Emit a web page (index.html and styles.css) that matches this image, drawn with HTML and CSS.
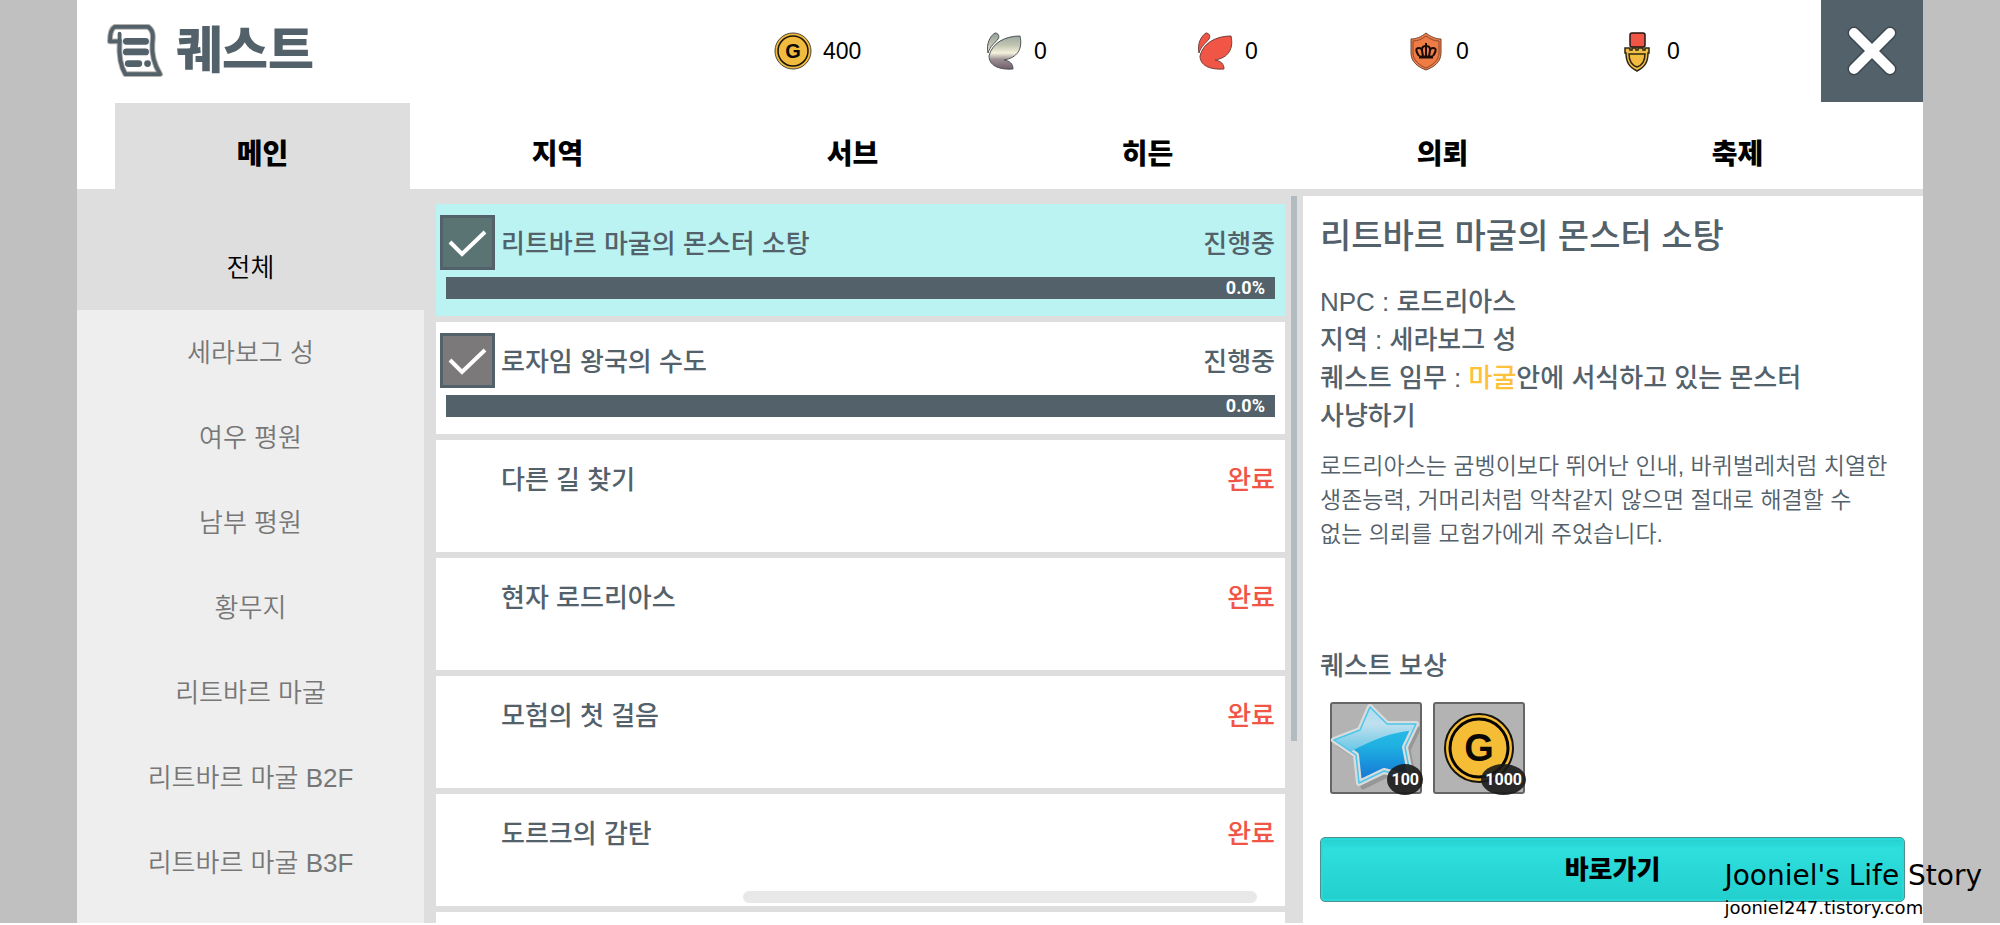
FILE: index.html
```html
<!DOCTYPE html>
<html lang="ko">
<head>
<meta charset="utf-8">
<meta name="viewport" content="width=device-width, initial-scale=1">
<title>퀘스트</title>
<link rel="stylesheet" href="styles.css">
</head>
<body>
<div class="stage">
  <div class="panel">
    <header class="header">
      <svg class="title-icon" viewBox="0 0 56 56" aria-hidden="true">
        <g fill="none" stroke="#b5b1ad" stroke-width="6" stroke-linejoin="round">
          <path d="M7 3H42C47 7 47 12 46 20C45 32 48 42 54 52H18C13 44 11 35 12 18H2C2 10 3 5 7 3Z"/>
        </g>
        <g fill="none" stroke="#53616b" stroke-width="4" stroke-linejoin="round" stroke-linecap="round">
          <path d="M7 3H42C47 7 47 12 46 20C45 32 48 42 54 52H18C13 44 11 35 12 18H2C2 10 3 5 7 3Z"/>
          <path d="M12 18V10"/>
          <path stroke-width="7" d="M19 18H39M19 29H39M21 41H32M41 41H41"/>
        </g>
      </svg>
      <h1 class="title">퀘스트</h1>
      <ul class="wallet">
        <li class="coin-count">
          <svg class="wallet-icon" viewBox="0 0 38 38" aria-hidden="true">
            <circle cx="19" cy="19" r="18" fill="#f0bb3f" stroke="#4d4534" stroke-width="1"/>
            <circle cx="19" cy="19" r="15" fill="none" stroke="#17130a" stroke-width="1.5"/>
            <text class="coin-letter" x="19" y="26" font-size="20">G</text>
          </svg>
          <span>400</span>
        </li>
        <li class="coin-count">
          <svg class="wallet-icon" viewBox="0 0 38 38" aria-hidden="true">
            <defs>
              <linearGradient id="pearl" x1="0" y1="0" x2="0" y2="38" gradientUnits="userSpaceOnUse">
                <stop offset="0" stop-color="#8d9c98"/>
                <stop offset=".35" stop-color="#c3c5b2"/>
                <stop offset=".55" stop-color="#f4f2dd"/>
                <stop offset=".72" stop-color="#9c8f94"/>
                <stop offset="1" stop-color="#6d5a66"/>
              </linearGradient>
            </defs>
            <g fill="url(#pearl)" stroke="#4c5253" stroke-width="1">
              <path d="M3 21C1 12 5 4 10 1C13 1 15 4 13 7C10 11 5 14 3 21Z"/>
              <path d="M4 24C7 11 20 4 35 4C38 17 32 26 19 28C25 29 28 32 28 37C13 38 4 33 4 24Z"/>
            </g>
          </svg>
          <span>0</span>
        </li>
        <li class="coin-count">
          <svg class="wallet-icon" viewBox="0 0 38 38" aria-hidden="true">
            <g fill="#f05545" stroke="#73403b" stroke-width="1">
              <path d="M3 21C1 12 5 4 10 1C13 1 15 4 13 7C10 11 5 14 3 21Z"/>
              <path d="M4 24C7 11 20 4 35 4C38 17 32 26 19 28C25 29 28 32 28 37C13 38 4 33 4 24Z"/>
            </g>
          </svg>
          <span>0</span>
        </li>
        <li class="coin-count">
          <svg class="wallet-icon" viewBox="0 0 38 38" aria-hidden="true">
            <path d="M19 1C24 5 29 7 34 7V21C34 30 27 35 19 38C11 35 4 30 4 21V7C9 7 14 5 19 1Z" fill="#ef7b45" stroke="#704634"/>
            <path d="M19 4C23 7 27 9 32 9V21C32 28 26 33 19 36C12 33 6 28 6 21V9C11 9 15 7 19 4Z" fill="none" stroke="#8d4b2e"/>
            <g fill="none" stroke="#190c06" stroke-width="2">
              <path d="M12 24C8 18 9 16 12 16C15 16 15 18 16 24C14 16 15 14 19 14C23 14 24 16 22 24C23 18 23 16 26 16C29 16 30 18 26 24M19 11V24"/>
              <path stroke-width="3" d="M12 25H26"/>
            </g>
          </svg>
          <span>0</span>
        </li>
        <li class="coin-count">
          <svg class="wallet-icon" viewBox="0 0 38 38" aria-hidden="true">
            <rect x="12" y="1" width="15" height="14" rx="2" fill="#f05545" stroke="#241412" stroke-width="1.5"/>
            <path d="M7 16H12V18H14V16H18V18H20V16H25V18H27V16H31V21H30C30 30 27 35 19 39C11 35 8 30 8 21H7Z" fill="#efbd49" stroke="#30270f" stroke-width="1.5"/>
            <path d="M11 22H27C27 29 25 33 19 35C13 33 11 29 11 22Z" fill="#f0bb3f" stroke="#30270f" stroke-width="1.5"/>
          </svg>
          <span>0</span>
        </li>
      </ul>
      <button class="close" type="button" aria-label="닫기">
        <svg class="close-icon" viewBox="0 0 50 50" aria-hidden="true">
          <path d="M7 7L43 43M43 7L7 43" stroke="#3c474f" stroke-width="13"/>
          <path d="M7 7L43 43M43 7L7 43" stroke="#fff" stroke-width="10"/>
        </svg>
      </button>
    </header>

    <nav class="tabs">
      <button class="tab tab-active" type="button">메인</button>
      <button class="tab" type="button">지역</button>
      <button class="tab" type="button">서브</button>
      <button class="tab" type="button">히든</button>
      <button class="tab" type="button">의뢰</button>
      <button class="tab" type="button">축제</button>
    </nav>

    <main class="content">
      <nav class="areas">
        <button class="area area-active" type="button">전체</button>
        <button class="area" type="button">세라보그 성</button>
        <button class="area" type="button">여우 평원</button>
        <button class="area" type="button">남부 평원</button>
        <button class="area" type="button">황무지</button>
        <button class="area" type="button">리트바르 마굴</button>
        <button class="area" type="button">리트바르 마굴 B2F</button>
        <button class="area" type="button">리트바르 마굴 B3F</button>
      </nav>

      <section class="list-pane">
        <ul class="quests">
          <li class="quest quest-selected">
            <div class="quest-row">
              <span class="check">
                <input class="check-input" type="checkbox" id="q1" checked>
                <svg class="check-mark" viewBox="0 0 55 55" aria-hidden="true"><path d="M10 27L22 39L45 17"/></svg>
              </span>
              <label class="quest-name" for="q1">리트바르 마굴의 몬스터 소탕</label>
              <span class="quest-state">진행중</span>
            </div>
            <div class="bar" role="progressbar" aria-valuenow="0">0.0%</div>
          </li>
          <li class="quest">
            <div class="quest-row">
              <span class="check">
                <input class="check-input" type="checkbox" id="q2" checked>
                <svg class="check-mark" viewBox="0 0 55 55" aria-hidden="true"><path d="M10 27L22 39L45 17"/></svg>
              </span>
              <label class="quest-name" for="q2">로자임 왕국의 수도</label>
              <span class="quest-state">진행중</span>
            </div>
            <div class="bar" role="progressbar" aria-valuenow="0">0.0%</div>
          </li>
          <li class="quest">
            <div class="quest-row"><span class="check"></span><span class="quest-name">다른 길 찾기</span><span class="quest-state quest-done">완료</span></div>
          </li>
          <li class="quest">
            <div class="quest-row"><span class="check"></span><span class="quest-name">현자 로드리아스</span><span class="quest-state quest-done">완료</span></div>
          </li>
          <li class="quest">
            <div class="quest-row"><span class="check"></span><span class="quest-name">모험의 첫 걸음</span><span class="quest-state quest-done">완료</span></div>
          </li>
          <li class="quest">
            <div class="quest-row"><span class="check"></span><span class="quest-name">도르크의 감탄</span><span class="quest-state quest-done">완료</span></div>
          </li>
          <li class="quest"></li>
        </ul>
        <div class="scroll-thumb"></div>
      </section>

      <section class="detail">
        <h2 class="detail-title">리트바르 마굴의 몬스터 소탕</h2>
        <p class="facts">NPC : 로드리아스<br>지역 : 세라보그 성<br>퀘스트 임무 : <em class="mark">마굴</em>안에 서식하고 있는 몬스터<br>사냥하기</p>
        <p class="story">로드리아스는 굼벵이보다 뛰어난 인내, 바퀴벌레처럼 치열한<br>생존능력, 거머리처럼 악착같지 않으면 절대로 해결할 수<br>없는 의뢰를 모험가에게 주었습니다.</p>
        <div class="reward">
          <h3 class="reward-title">퀘스트 보상</h3>
          <ul class="reward-items">
            <li class="item">
              <svg class="item-icon" viewBox="0 0 88 88" aria-hidden="true">
                <defs>
                  <linearGradient id="star-fill" x1="0" y1="0" x2="0" y2="1">
                    <stop offset="0" stop-color="#35c4ea"/>
                    <stop offset=".5" stop-color="#1fb2e2"/>
                    <stop offset="1" stop-color="#1470d4"/>
                  </linearGradient>
                  <linearGradient id="star-gloss" x1="0" y1="0" x2="0" y2="50" gradientUnits="userSpaceOnUse">
                    <stop offset="0" stop-color="#a9dcf0"/>
                    <stop offset=".4" stop-color="#bfe0ee"/>
                    <stop offset="1" stop-color="#5fc4e6"/>
                  </linearGradient>
                  <clipPath id="star-clip"><path d="M38 3L55 20L84 20L73 43L79 74L52 67L27 79L24 51L2 36L28 26Z"/></clipPath>
                </defs>
                <path d="M42 8L58 24L86 25L76 46L82 77L55 71L31 83L28 55L7 41L33 30Z" fill="#858585" stroke="#858585" stroke-width="5" stroke-linejoin="round" opacity=".6"/>
                <path d="M38 3L55 20L84 20L73 43L79 74L52 67L27 79L24 51L2 36L28 26Z" fill="url(#star-fill)" stroke="#d9dcdd" stroke-width="6" stroke-linejoin="round"/>
                <g clip-path="url(#star-clip)">
                  <path d="M0 0H88V26C62 27 44 34 18 48L0 60Z" fill="url(#star-gloss)"/>
                </g>
                <path d="M38 3L55 20L84 20L73 43L79 74L52 67L27 79L24 51L2 36L28 26Z" fill="none" stroke="#4cc6ea" stroke-width="1.5" stroke-linejoin="round"/>
              </svg>
              <span class="item-count">100</span>
            </li>
            <li class="item">
              <svg class="item-icon" viewBox="0 0 88 88" aria-hidden="true">
                <circle cx="44" cy="44" r="34" fill="#f5bc35" stroke="#17130a" stroke-width="2"/>
                <circle cx="44" cy="44" r="29" fill="none" stroke="#050400" stroke-width="3"/>
                <text class="coin-letter" x="44" y="57" font-size="38">G</text>
              </svg>
              <span class="item-count">1000</span>
            </li>
          </ul>
        </div>
        <button class="go" type="button">바로가기</button>
      </section>
    </main>
  </div>
  <div class="home-bar"></div>
  <p class="credit"><span class="credit-name">Jooniel's Life Story</span><span class="credit-site">jooniel247.tistory.com</span></p>
</div>
</body>
</html>
```
FILE: styles.css
```css
* {
  box-sizing: border-box;
}

body,
h1,
h2,
h3,
p,
ul {
  margin: 0;
  padding: 0;
}

ul {
  list-style: none;
}

body {
  background: #fff;
  color: #53616b;
  font-family: "Liberation Sans", "Noto Sans CJK KR", sans-serif;
  font-size: 26px;
  font-weight: 500;
}

button {
  margin: 0;
  padding: 0;
  border: 0;
  background: none;
  color: #000;
  font: inherit;
}

.stage {
  position: relative;
  height: calc(100vh - 2px);
  padding: 0 77px;
  overflow: hidden;
  background: #c0c0c0;
}

.panel {
  display: flex;
  flex-direction: column;
  height: 100%;
  background: #fff;
}

/* Header */
.header {
  display: flex;
  align-items: center;
  height: 102px;
  padding-left: 31px;
}

.title-icon {
  width: 54px;
  height: 54px;
  overflow: visible;
}

.title {
  margin-left: 14px;
  font-size: 50px;
  font-weight: 900;
  line-height: 56px;
}

.wallet {
  display: flex;
  gap: 121px;
  margin-left: auto;
  margin-right: 113px;
}

.coin-count {
  display: flex;
  align-items: center;
  gap: 11px;
  width: 90px;
  color: #000;
  font-size: 23px;
}

.wallet-icon {
  width: 38px;
  height: 38px;
  overflow: visible;
}

.coin-letter {
  fill: #0a0803;
  font-weight: 700;
  text-anchor: middle;
}

.close {
  display: grid;
  place-items: center;
  width: 102px;
  height: 102px;
  background: #53616b;
}

.close-icon {
  width: 50px;
  height: 50px;
  overflow: visible;
  stroke-linecap: round;
}

/* Tabs */
.tabs {
  display: grid;
  grid-template-columns: repeat(6, 1fr);
  height: 94px;
  padding: 0 38px;
  border-bottom: 7px solid #dedede;
}

.tab {
  margin-top: 1px;
  padding-top: 12px;
  font-size: 28px;
  font-weight: 900;
}

.tab-active {
  background: #dedede;
}

/* Three columns */
.content {
  display: grid;
  flex: 1;
  grid-template-columns: minmax(0, 347fr) minmax(0, 879fr) minmax(0, 620fr);
  min-height: 0;
  background: #dedede;
}

.areas {
  display: flex;
  flex-direction: column;
  overflow: hidden;
  background: #eee;
}

.area {
  flex: none;
  height: 85px;
  padding-bottom: 4px;
  color: #777;
  font-weight: 350;
}

.area-active {
  height: 114px;
  padding-top: 28px;
  background: #dedede;
  color: #000;
}

.list-pane {
  display: flex;
  gap: 6px;
  padding-right: 6px;
  padding-left: 12px;
  overflow: hidden;
}

.quests {
  display: flex;
  flex: 1;
  flex-direction: column;
  gap: 6px;
  padding-top: 8px;
}

.quest {
  flex: none;
  min-height: 112px;
  padding: 11px 10px 17px 4px;
  background: #fff;
}

.quest-selected {
  background: #baf3f1;
}

.quest-row {
  display: flex;
  align-items: center;
  gap: 6px;
  height: 55px;
}

.check {
  display: grid;
  width: 55px;
  height: 55px;
}

.check-input,
.check-mark {
  grid-area: 1 / 1;
  width: 55px;
  height: 55px;
  margin: 0;
}

.check-input {
  appearance: none;
  border: 3px solid #53616b;
  background: #7b7979;
}

.quest-selected .check-input {
  background: #5a7473;
}

.check-mark {
  fill: none;
  stroke: #fff;
  stroke-width: 4;
  pointer-events: none;
}

.quest-name,
.quest-state {
  padding-bottom: 3px;
}

.quest-name {
  flex: 1;
}

.quest-done {
  color: #f05545;
}

.bar {
  height: 22px;
  margin-top: 7px;
  margin-left: 6px;
  padding-right: 10px;
  background: #53616b;
  color: #fff;
  font-family: "Roboto", sans-serif;
  font-size: 18px;
  font-weight: 700;
  line-height: 22px;
  text-align: right;
}

.scroll-thumb {
  width: 6px;
  height: 75%;
  background: #b2bbc0;
}

/* Detail */
.detail {
  display: flex;
  flex-direction: column;
  padding: 20px 18px 21px 17px;
  overflow: hidden;
  background: #fff;
}

.detail-title {
  font-size: 34px;
  font-weight: 500;
  line-height: 40px;
}

.facts {
  margin-top: 27px;
  line-height: 38px;
}

.mark {
  color: #ffc03a;
  font-style: normal;
}

.story {
  margin-top: 14px;
  font-size: 23px;
  font-weight: 350;
  line-height: 34px;
}

.reward {
  margin-top: auto;
}

.reward-title {
  font-size: 26px;
  font-weight: 500;
  line-height: 38px;
}

.reward-items {
  display: flex;
  gap: 11px;
  padding: 17px 10px 0;
}

.item {
  position: relative;
  width: 92px;
  height: 92px;
  border: 2px solid #666;
  border-radius: 3px;
  background: #b3b3b3;
}

.item-icon {
  display: block;
  width: 88px;
  height: 88px;
  overflow: visible;
}

.item-count {
  position: absolute;
  right: -3px;
  bottom: -3px;
  min-width: 35px;
  padding: 0 4px;
  border-radius: 50% / 50%;
  background: rgba(25, 25, 25, 0.9);
  color: #fff;
  font-family: "Roboto", sans-serif;
  font-size: 16px;
  font-weight: 700;
  line-height: 31px;
  text-align: center;
}

.go {
  flex: none;
  height: 65px;
  margin-top: 43px;
  padding-bottom: 4px;
  border: 1px solid #4f8f90;
  border-radius: 5px;
  background: linear-gradient(#24cfcd, #2edfdd 18%, #22cfcd);
  box-shadow: inset 0 0 0 2px #27dad8;
  font-weight: 900;
}

/* Overlays */
.home-bar {
  position: absolute;
  right: 743px;
  bottom: 20px;
  left: 743px;
  height: 12px;
  border-radius: 6px;
  background: #e8e8e8;
}

.credit {
  position: absolute;
  right: 18px;
  bottom: 3px;
  display: flex;
  flex-direction: column;
  color: #000;
  font-family: "DejaVu Sans", sans-serif;
  font-weight: 400;
}

.credit-name {
  font-size: 28px;
  line-height: 40px;
}

.credit-site {
  font-size: 18px;
  line-height: 24px;
}
```
